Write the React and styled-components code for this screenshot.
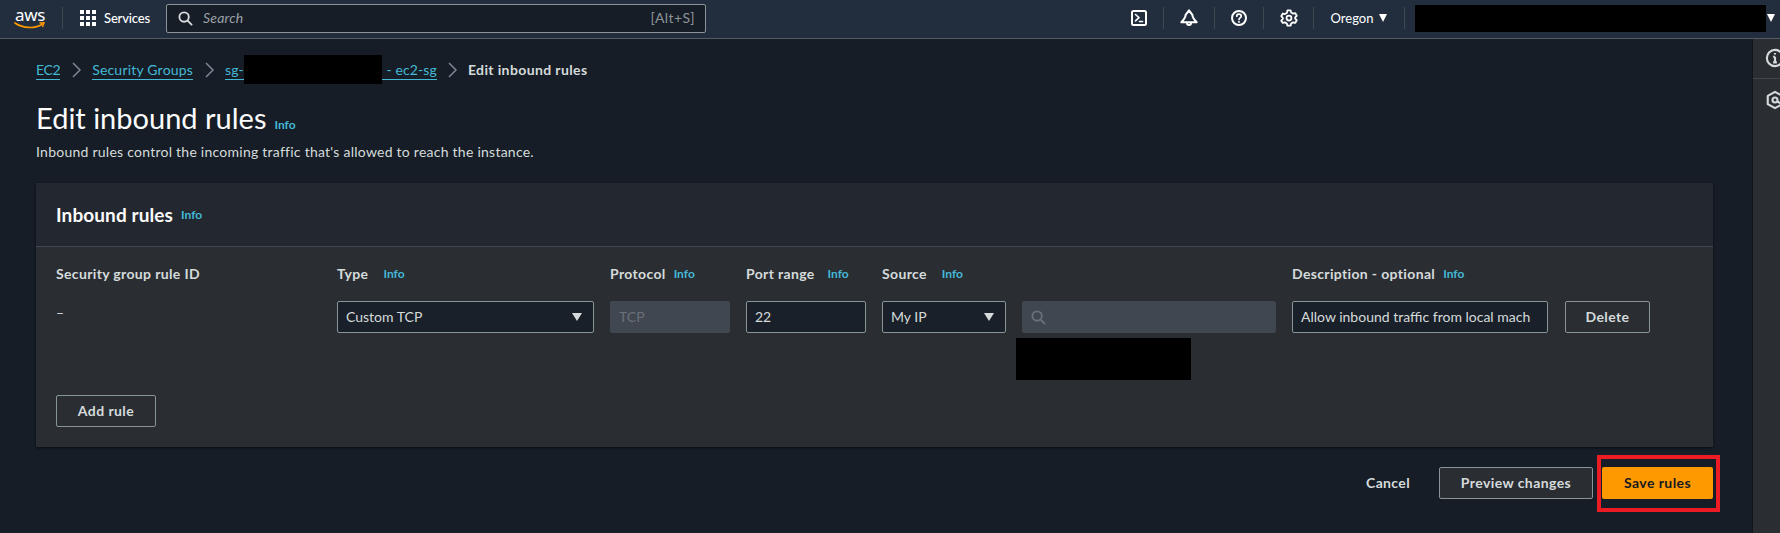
import React from "react";
import styled, { createGlobalStyle } from "styled-components";

const Global = createGlobalStyle`
  html, body { margin: 0; padding: 0; background: #161d26; }
  body { font-family: "Lato", "Noto Sans", sans-serif; font-size: 14px; line-height: 20px; color: #d5dbdb; }
  * { box-sizing: border-box; }
`;

const Page = styled.div`
  width: 1780px; height: 533px; overflow: hidden; display: flex; flex-direction: column; background: #161d26;
`;
const TopBar = styled.header`
  height: 39px; flex: none; display: flex; align-items: center; background: #222e3e; border-bottom: 1px solid #545b64; padding: 0 5px 2px 14px;
`;
const LogoWrap = styled.div`
  width: 32px; height: 24px; display: flex; flex-direction: column; align-items: center; position: relative; color: #fff;
`;
const LogoText = styled.span`
  font: 400 17px/15px "Noto Sans", sans-serif; letter-spacing: -0.3px; margin-top: 1px;
`;
const VRule = styled.div`
  width: 1px; height: 22px; background: #414750; margin: 0 17px 0 16px;
`;
const Services = styled.div`
  display: flex; align-items: center; gap: 8px; color: #fff; font-size: 13px; font-weight: 500; width: 86px; letter-spacing: -0.15px;
`;
const SearchBox = styled.div`
  width: 540px; height: 29px; background: #161d26; border: 1px solid #8d9499; border-radius: 2px; display: flex; align-items: center; padding: 0 10px 0 11px; gap: 10px;
`;
const SearchHint = styled.span`
  font-style: italic; color: #9aa1a8; font-size: 14px; flex: 1; letter-spacing: 0.2px;
`;
const Shortcut = styled.span`
  color: #8d9499; font-size: 14px; letter-spacing: 0.4px;
`;
const TopRight = styled.div`
  margin-left: auto; display: flex; align-items: center; height: 100%;
`;
const IconCell = styled.div`
  width: ${(p) => p.$w}px; height: 22px; display: flex; align-items: center; justify-content: center; gap: 6px; border-right: 1px solid #414750; color: #fff; font-size: 13px;
`;
const Redact = styled.div`
  background: #000; flex: none; width: ${(p) => p.$w}px; height: ${(p) => p.$h}px;
`;
const AccountRedact = styled(Redact)`
  margin-left: 10px;
`;
const Caret = styled.span`
  width: 0; height: 0; display: inline-block; flex: none;
  border-left: ${(p) => (p.$big ? 5.5 : 4.5)}px solid transparent;
  border-right: ${(p) => (p.$big ? 5.5 : 4.5)}px solid transparent;
  border-top: 8px solid ${(p) => p.$c || "#fff"};
`;

const Body = styled.div`
  flex: 1; display: flex; min-height: 0;
`;
const Content = styled.main`
  flex: 1; padding: 17px 39px 0 36px; min-width: 0; display: flex; flex-direction: column;
`;
const SideRail = styled.aside`
  width: 28px; flex: none; background: #2a2e33; border-left: 1px solid #12161c; overflow: hidden; color: #d5dbdb;
`;
const RailItem = styled.div`
  height: ${(p) => p.$h}px; padding: ${(p) => p.$top}px 0 0 12px; border-bottom: ${(p) => (p.$line ? "1px solid #414750" : "none")}; width: 28px;
  svg { display: block; flex: none; }
`;

const Crumbs = styled.nav`
  height: 29px; display: flex; align-items: center; padding-bottom: 1px;
`;
const CrumbLink = styled.span`
  color: #44b9d6; border-bottom: 1px solid #44b9d6; line-height: 18px; display: flex; align-items: center; height: 19px; letter-spacing: ${(p) => p.$ls ?? 0.1}px;
`;
const CrumbRedact = styled(Redact)`
  margin: -5px 1px -5px 0;
`;
const CrumbSep = styled.span`
  display: flex; width: ${(p) => p.$w || 32}px; justify-content: center; color: #7d8998;
`;
const CrumbCurrent = styled.span`
  font-weight: 700; color: #d5dbdb; letter-spacing: 0.38px;
`;
const TitleRow = styled.div`
  display: flex; align-items: baseline; gap: 8px; margin-top: 15px; height: 36px;
`;
const Title = styled.h1`
  margin: 0; font-size: 29px; line-height: 36px; font-weight: 400; color: #fbfbfb;
`;
const Info = styled.span`
  color: #44b9d6; font-size: 12px; font-weight: 700; line-height: 16px; letter-spacing: 0;
`;
const Desc = styled.p`
  margin: 6px 0 0; color: #d5dbdb; line-height: 20px; letter-spacing: 0.25px;
`;
const Card = styled.section`
  margin-top: 21px; height: 264px; background: #2a2e33; box-shadow: 0 1px 2px #0a0d12; display: flex; flex-direction: column;
`;
const CardHead = styled.div`
  height: 65px; background: #232730; border-bottom: 1px solid #414750; padding: 0 20px; display: flex; align-items: center; gap: 8px;
`;
const CardTitle = styled.h2`
  margin: 0; font-size: 19px; font-weight: 700; color: #fbfbfb; line-height: 24px; letter-spacing: 0.1px;
`;
const CardBody = styled.div`
  padding: 17px 20px 20px;
`;
const RuleGrid = styled.div`
  display: grid; grid-template-columns: 265px 257px 120px 120px 124px 254px 256px 86px; column-gap: 16px; row-gap: 17px; height: 131px; align-content: start;
`;
const ColLabel = styled.div`
  display: flex; align-items: center; gap: ${(p) => p.$gap || 8}px; font-weight: 700; color: #d5dbdb; height: 20px; letter-spacing: 0.35px; white-space: nowrap;
`;
const Dash = styled.div`
  height: 32px; padding-top: 2px; line-height: 20px;
`;
const Field = styled.div`
  height: 32px; border-radius: 2px; display: flex; align-items: center; padding: 0 ${(p) => (p.$select ? 11 : 8)}px 0 8px; gap: 8px; justify-content: space-between;
  border: 1px solid ${(p) => (p.$disabled ? "#414750" : "#879596")};
  background: ${(p) => (p.$disabled ? "#414750" : "#1a2029")};
  color: ${(p) => (p.$disabled ? "#687078" : "#d5dbdb")};
  white-space: nowrap; overflow: hidden;
`;
const SearchField = styled(Field)`
  justify-content: flex-start;
`;
const SearchCell = styled.div`
  display: flex; flex-direction: column; height: 79px;
`;
const SearchRedact = styled(Redact)`
  margin: 5px 0 0 -6px;
`;
const OutlineBtn = styled.button`
  height: 32px; border: 1px solid #879596; border-radius: 2px; background: transparent; color: #d5dbdb; font: 700 14px/20px "Lato", "Noto Sans", sans-serif; letter-spacing: 0.42px; width: ${(p) => p.$w}px; padding: 0; justify-self: end;
`;
const Footer = styled.div`
  margin-top: 20px; display: flex; justify-content: flex-end; align-items: center;
`;
const CancelBtn = styled.button`
  background: none; border: none; padding: 0; color: #d5dbdb; font: 700 14px/20px "Lato", "Noto Sans", sans-serif; letter-spacing: 0.35px; margin-right: 29px;
`;
const FooterOutline = styled(OutlineBtn)`
  background: #2a2e33; margin-right: 9px;
`;
const SaveWrap = styled.div`
  position: relative; width: 111px; height: 32px;
`;
const SaveBtn = styled.button`
  width: 100%; height: 32px; border: none; border-radius: 2px; background: #ff9900; color: #16191f; font: 700 14px/20px "Lato", "Noto Sans", sans-serif; letter-spacing: 0.42px; padding: 0;
`;
const Highlight = styled.div`
  position: absolute; left: -5px; top: -12px; width: 123px; height: 57px; border: 4px solid #ed1c24; pointer-events: none;
`;
const IconTint = styled.span`
  color: ${(p) => p.$c}; display: flex;
`;
const LastCaret = styled.span`
  display: flex; margin-left: 1px;
`;
const Smile = styled.svg`
  position: absolute; top: 16px; left: 0;
`;

const I = ({ s = 16, children, sw = 2 }) => (
  <svg width={s} height={s} viewBox="0 0 16 16" fill="none" stroke="currentColor" strokeWidth={sw} strokeLinejoin="round" strokeLinecap="round">{children}</svg>
);
const SearchIcon = ({ c }) => (
  <IconTint $c={c}>
    <I s={15}><circle cx="6.5" cy="6.5" r="5" /><path d="M10.5 10.5 14.5 14.5" /></I>
  </IconTint>
);
const Chevron = () => (
  <svg width="9" height="16" viewBox="0 0 9 16" fill="none" stroke="currentColor" strokeWidth="1.5"><path d="M1 1l7 7-7 7" /></svg>
);
const Grid = () => (
  <svg width="16" height="16" viewBox="0 0 16 16" fill="#fff">
    {[0, 6, 12].flatMap((y) => [0, 6, 12].map((x) => <rect key={`${x}-${y}`} x={x} y={y} width="4" height="4" />))}
  </svg>
);

export default function App() {
  return (
    <Page>
      <Global />
      <TopBar>
        <LogoWrap>
          <LogoText>aws</LogoText>
          <Smile width="32" height="8" viewBox="0 0 32 8" fill="none">
            <path d="M1 1c8 5.5 20 6 27 1.2" stroke="#ff9900" strokeWidth="1.7" strokeLinecap="round" />
            <path d="M25.5 1 30 .8 28.5 5" stroke="#ff9900" strokeWidth="1.4" />
          </Smile>
        </LogoWrap>
        <VRule />
        <Services><Grid />Services</Services>
        <SearchBox>
          <SearchIcon c="#d5dbdb" />
          <SearchHint>Search</SearchHint>
          <Shortcut>[Alt+S]</Shortcut>
        </SearchBox>
        <TopRight>
          <IconCell $w={50}>
            <I><rect x="1" y="1" width="14" height="14" rx="1.5" /><path d="M4.5 4.5 8 7.7 4.5 10.8" strokeWidth="1.6" /><path d="M8.5 11.5h3" strokeWidth="1.6" /></I>
          </IconCell>
          <IconCell $w={51}>
            <I s={18} sw={1.8}><path d="M8 1.2 L5 5.2 C5 7.8 3.2 9.8 1.2 11.8 h13.6 C12.8 9.8 11 7.8 11 5.2 Z" /><path d="M6.2 12.2c0 2.6 3.6 2.6 3.6 0" /></I>
          </IconCell>
          <IconCell $w={49}>
            <I><circle cx="8" cy="8" r="7" /><path d="M5.8 6.2C5.8 3.5 10.2 3.5 10.2 6.2 10.2 7.900 8 7.800 8 9.500" strokeWidth="1.7" /><path d="M8 11.7v.4" strokeWidth="1.7" /></I>
          </IconCell>
          <IconCell $w={50}>
            <I s={18} sw={1.6}><path d="M6.6 1.2h2.800l.5 1.900 1.700 1 1.900-.5 1.400 2.400-1.400 1.400v1.200l1.400 1.400-1.400 2.400-1.900-.5-1.700 1-.5 1.900H6.600l-.5-1.900-1.700-1-1.900.5L1.100 10.400l1.400-1.400V7.800L1.100 6.400 2.500 4l1.900.5 1.700-1Z" /><circle cx="8" cy="8" r="2.200" /></I>
          </IconCell>
          <IconCell $w={91}>Oregon <Caret /></IconCell>
          <AccountRedact $w={351} $h={27} />
          <LastCaret><Caret /></LastCaret>
        </TopRight>
      </TopBar>
      <Body>
        <Content>
          <Crumbs>
            <CrumbLink $ls={-0.4}>EC2</CrumbLink>
            <CrumbSep><Chevron /></CrumbSep>
            <CrumbLink $ls={0.2}>Security Groups</CrumbLink>
            <CrumbSep><Chevron /></CrumbSep>
            <CrumbLink>sg-<CrumbRedact $w={138} $h={29} />&nbsp;- ec2-sg</CrumbLink>
            <CrumbSep $w={31}><Chevron /></CrumbSep>
            <CrumbCurrent>Edit inbound rules</CrumbCurrent>
          </Crumbs>
          <TitleRow><Title>Edit inbound rules</Title><Info>Info</Info></TitleRow>
          <Desc>Inbound rules control the incoming traffic that's allowed to reach the instance.</Desc>
          <Card>
            <CardHead><CardTitle>Inbound rules</CardTitle><Info>Info</Info></CardHead>
            <CardBody>
              <RuleGrid>
                <ColLabel>Security group rule ID</ColLabel>
                <ColLabel $gap={15}>Type <Info>Info</Info></ColLabel>
                <ColLabel $gap={8}>Protocol <Info>Info</Info></ColLabel>
                <ColLabel $gap={13}>Port range <Info>Info</Info></ColLabel>
                <ColLabel $gap={15}>Source <Info>Info</Info></ColLabel>
                <div />
                <ColLabel $gap={8}>Description - optional <Info>Info</Info></ColLabel>
                <div />
                <Dash>–</Dash>
                <Field $select>Custom TCP <Caret $big $c="#d5dbdb" /></Field>
                <Field $disabled>TCP</Field>
                <Field>22</Field>
                <Field $select>My IP <Caret $big $c="#d5dbdb" /></Field>
                <SearchCell>
                  <SearchField $disabled><SearchIcon c="#687078" /></SearchField>
                  <SearchRedact $w={175} $h={42} />
                </SearchCell>
                <Field>Allow inbound traffic from local mach</Field>
                <OutlineBtn $w={85}>Delete</OutlineBtn>
              </RuleGrid>
              <OutlineBtn $w={100}>Add rule</OutlineBtn>
            </CardBody>
          </Card>
          <Footer>
            <CancelBtn>Cancel</CancelBtn>
            <FooterOutline $w={154}>Preview changes</FooterOutline>
            <SaveWrap>
              <SaveBtn>Save rules</SaveBtn>
              <Highlight />
            </SaveWrap>
          </Footer>
        </Content>
        <SideRail>
          <RailItem $h={40} $top={9} $line>
            <svg width="20" height="20" viewBox="0 0 16 16" fill="none" stroke="currentColor" strokeWidth="1.7"><circle cx="8" cy="8" r="6.5" /><path d="M8 7v4.500M6.500 11.500h3M6.500 7H8" /><path d="M8 4v1.200" /></svg>
          </RailItem>
          <RailItem $h={50} $top={11}>
            <svg width="20" height="20" viewBox="0 0 16 16" fill="none" stroke="currentColor" strokeWidth="1.7" strokeLinejoin="round"><path d="M8 1.500 13.800 4.700v6.600L8 14.500 2.200 11.300V4.700Z" /><circle cx="8" cy="8" r="2" /><path d="M9.500 9 13.800 11.300" /></svg>
          </RailItem>
        </SideRail>
      </Body>
    </Page>
  );
}
